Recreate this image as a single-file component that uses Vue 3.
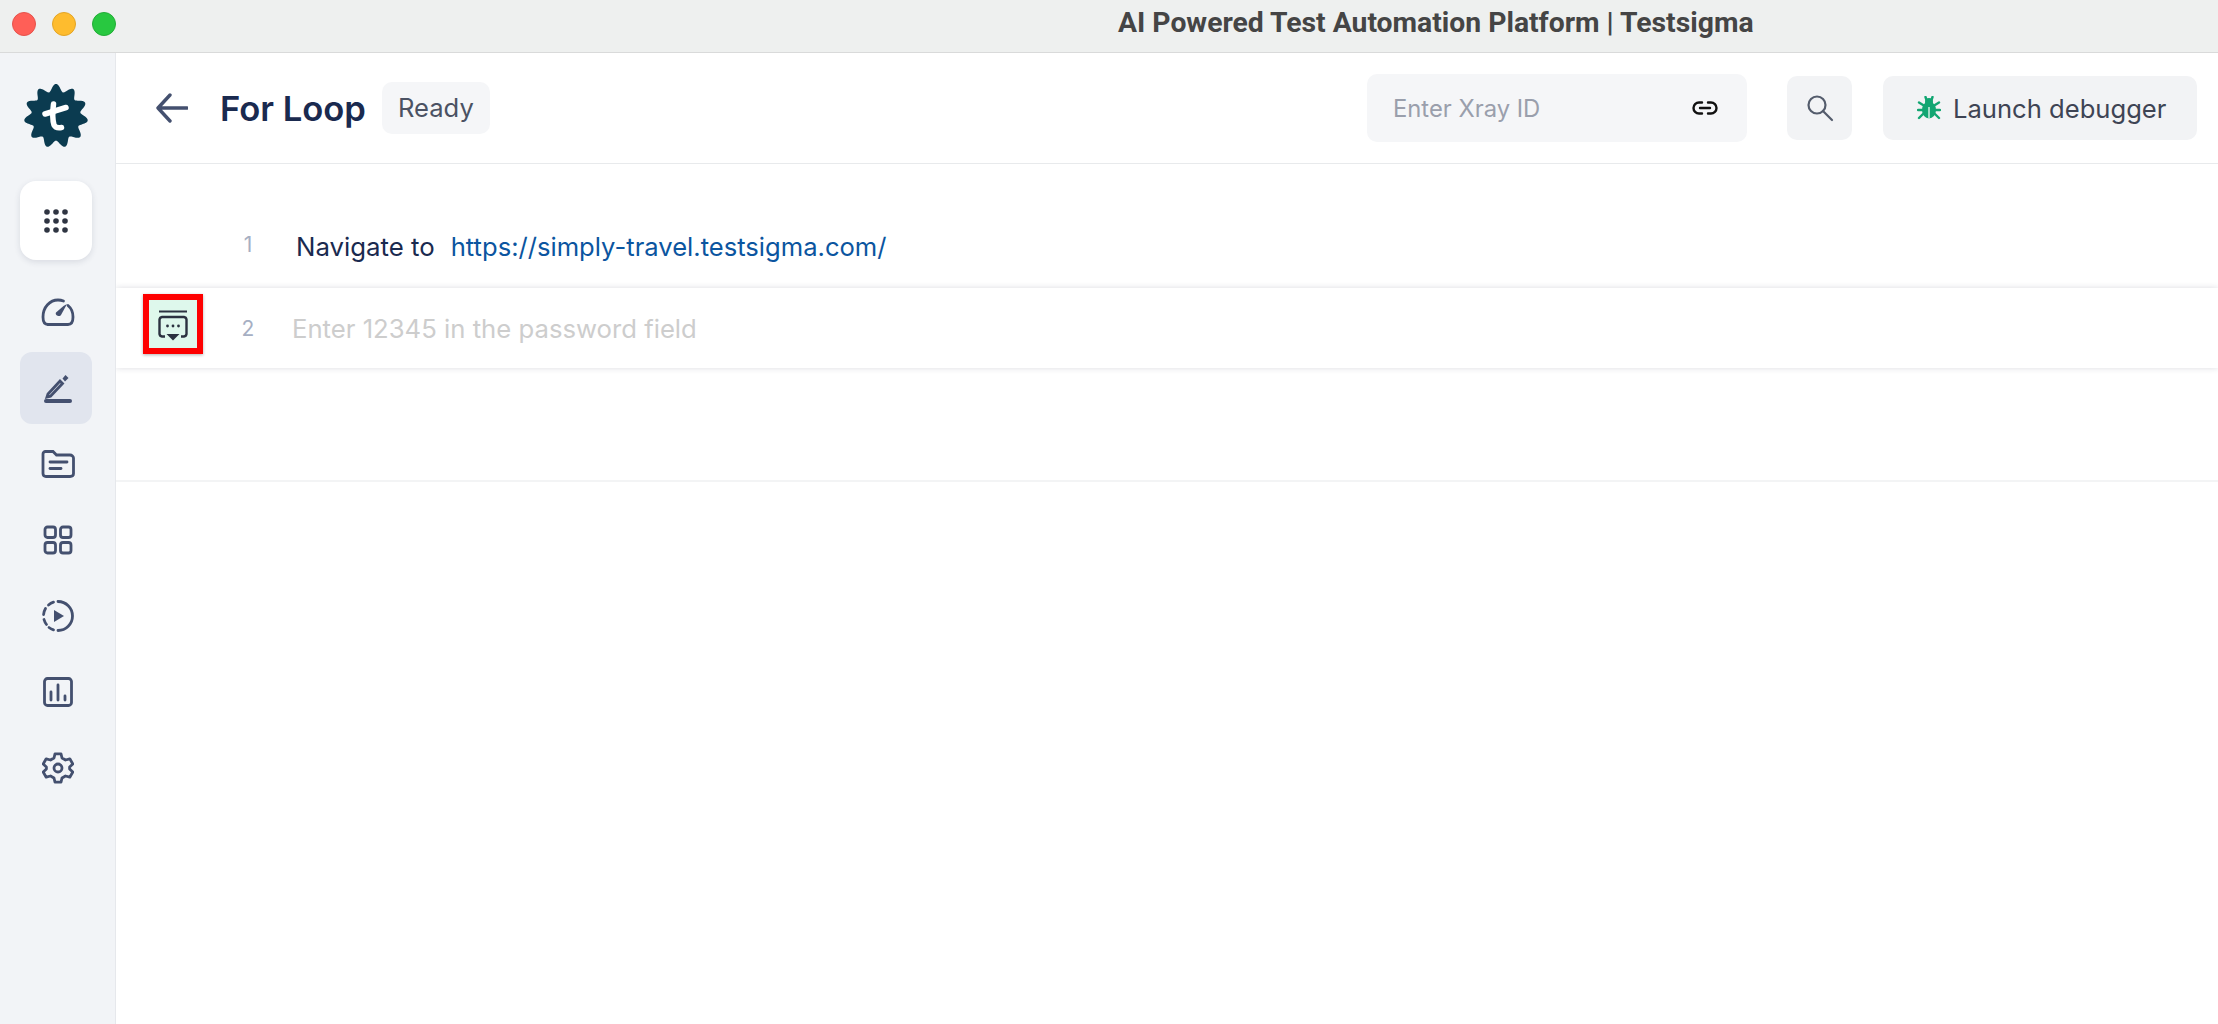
<script setup>
import { computed } from 'vue'

// Scalloped badge behind the "t" of the logo
const badgePath = computed(() => {
  const points = []
  for (let i = 0; i < 330; i++) {
    const a = (i / 330) * Math.PI * 2
    const r = 28.3 + 3.7 * Math.cos(a * 11)
    const x = 32 + r * Math.sin(a)
    const y = 32 - r * Math.cos(a)
    points.push(`${x.toFixed(2)} ${y.toFixed(2)}`)
  }
  return `M${points.join('L')}Z`
})

const dots = []
for (const y of [3, 12, 21]) {
  for (const x of [3, 12, 21]) dots.push({ x, y })
}
</script>

<template>
  <div class="window">
    <div class="titlebar">
      <div class="lights">
        <span class="light red"></span>
        <span class="light yellow"></span>
        <span class="light green"></span>
      </div>
      <div class="window-title">AI Powered Test Automation Platform | Testsigma</div>
    </div>

    <div class="body">
      <aside class="sidebar">
        <svg class="logo" width="64" height="64" viewBox="0 0 64 64">
          <path :d="badgePath" fill="#0b3b50" />
          <path d="M29.500 20 C28.500 28 28.500 36 30 41 C31.500 44 34.500 44 37.500 43.500" fill="none" stroke="#fff" stroke-width="5.500" stroke-linecap="round" />
          <path d="M21 30 L42 23.500" fill="none" stroke="#fff" stroke-width="5.500" stroke-linecap="round" />
        </svg>

        <div class="apps">
          <svg width="24" height="24" viewBox="0 0 24 24">
            <circle v-for="d in dots" :key="d.x + '-' + d.y" :cx="d.x" :cy="d.y" r="2.800" fill="#2f3542" />
          </svg>
        </div>

        <div class="nav">
          <div class="nav-item">
            <svg width="34" height="28" viewBox="0 0 34 28" class="ico">
              <path d="M7 26.500 H27 C30.500 26.500 32 24 32 19 C32 14 30 10 27 7.500" />
              <path d="M22.500 3 C20.500 2.200 19 2 17 2 C9 2 2 9 2 19 C2 24 3.500 26.500 7 26.500" />
              <path class="fill" d="M22.500 8 L26 6 L20 17 C18.500 19.500 13.500 17 15 14.500 Z" />
            </svg>
          </div>
          <div class="nav-item active">
            <svg width="30" height="30" viewBox="0 0 30 30" class="ico">
              <path d="M5 21 L4 24 L7.500 23.200 L19.500 10.500 L17 8 Z" />
              <path class="fill" d="M19.500 5.500 L22.500 2 L25.500 5 L22 8.500 Z" />
              <rect class="fill" x="1" y="26" width="28" height="4" rx="2" stroke="none" />
            </svg>
          </div>
          <div class="nav-item">
            <svg width="34" height="28" viewBox="0 0 34 28" class="ico">
              <path d="M2 4 C2 2.500 3 1.500 4.500 1.500 H12 L15.500 5 H29 C31 5 32.500 6.500 32.500 8 V23.500 C32.500 25.500 31 26.500 29 26.500 H5 C3 26.500 2 25.500 2 23.500 Z" />
              <path d="M9 12 H26" />
              <path d="M9 18.500 H20" />
            </svg>
          </div>
          <div class="nav-item">
            <svg width="30" height="30" viewBox="0 0 30 30" class="ico">
              <rect x="2" y="2" width="10.500" height="10.500" rx="2.500" />
              <rect x="17.500" y="2" width="10.500" height="10.500" rx="2.500" />
              <rect x="2" y="17.500" width="10.500" height="10.500" rx="2.500" />
              <rect x="17.500" y="17.500" width="10.500" height="10.500" rx="2.500" />
            </svg>
          </div>
          <div class="nav-item">
            <svg width="32" height="32" viewBox="0 0 32 32" class="ico">
              <path d="M16 1.500 A14.500 14.500 0 0 1 16 30.500 M11.500 29.800 A14.500 14.500 0 0 1 7 27.500 M4.500 24.500 A14.500 14.500 0 0 1 2 19.500 M1.600 14.500 A14.500 14.500 0 0 1 3.500 8.500 M6.500 5 A14.500 14.500 0 0 1 11.500 2.200" />
              <path class="fill" d="M12 10 L22 16 L12 22 Z" />
            </svg>
          </div>
          <div class="nav-item">
            <svg width="30" height="30" viewBox="0 0 30 30" class="ico">
              <rect x="1.500" y="1.500" width="27" height="27" rx="3" />
              <path d="M8 15 V23" />
              <path d="M15 8 V23" />
              <path d="M22 19 V23" />
            </svg>
          </div>
          <div class="nav-item">
            <svg width="32" height="32" viewBox="0 0 32 32" class="ico">
              <path d="M13 1.800 H19 L20 6 L23.500 8 L27.800 6.800 L30.800 12 L27.600 15 V17 L30.800 20 L27.800 25.200 L23.500 24 L20 26 L19 30.200 H13 L12 26 L8.500 24 L4.200 25.200 L1.200 20 L4.400 17 V15 L1.200 12 L4.200 6.800 L8.500 8 L12 6 Z" stroke-linejoin="round" />
              <circle cx="16" cy="16" r="4" />
            </svg>
          </div>
        </div>
      </aside>

      <main class="main">
        <header class="header">
          <svg class="back" width="32" height="30" viewBox="0 0 32 30">
            <path d="M14 2 L2 15 L14 28 M2 15 H31" fill="none" stroke="#44506f" stroke-width="3.400" stroke-linecap="round" stroke-linejoin="round" />
          </svg>
          <h1 class="title">For Loop</h1>
          <span class="badge">Ready</span>

          <div class="spacer"></div>

          <div class="xray">
            <span class="xray-text">Enter Xray ID</span>
            <svg width="26" height="14" viewBox="0 0 26 14">
              <path d="M10 1.500 H7 A5.500 5.500 0 0 0 7 12.500 H10 M16 1.500 H19 A5.500 5.500 0 0 1 19 12.500 H16 M8 7 H18" fill="none" stroke="#111" stroke-width="2.400" stroke-linecap="round" />
            </svg>
          </div>

          <button class="search">
            <svg width="28" height="28" viewBox="0 0 28 28">
              <circle cx="11" cy="11" r="8.500" fill="none" stroke="#545c6c" stroke-width="2.200" />
              <path d="M17 17 L26 26" stroke="#545c6c" stroke-width="2.200" stroke-linecap="round" />
            </svg>
          </button>

          <button class="debugger">
            <svg width="24" height="24" viewBox="0 0 24 24">
              <ellipse cx="12" cy="14" rx="7" ry="8.500" fill="#12a672" />
              <circle cx="12" cy="6" r="4" fill="#12a672" />
              <path d="M8.500 1 L9.500 4 M15.500 1 L14.500 4 M6 9 L2 6.500 M18 9 L22 6.500 M6 14 H1 M18 14 H23 M6 18 L2 22 M18 18 L22 22" stroke="#12a672" stroke-width="2.400" stroke-linecap="round" />
              <path d="M12 11 V22.500" stroke="#fff" stroke-width="1.200" />
            </svg>
            <span>Launch debugger</span>
          </button>
        </header>

        <section class="steps">
          <div class="step first">
            <div class="gutter"></div>
            <span class="num">1</span>
            <span class="step-text">Navigate to</span>
            <a class="link">https://simply-travel.testsigma.com/</a>
          </div>

          <div class="step second">
            <div class="gutter">
              <div class="marker">
                <svg width="30" height="33" viewBox="0 0 30 33">
                  <path d="M1 1.500 H29" fill="none" stroke="#2b3240" stroke-width="2" />
                  <path d="M7 26.500 H4 A3 3 0 0 1 1.500 24 V9.500 A3 3 0 0 1 4 7 H26 A3 3 0 0 1 28.500 9.500 V24 A3 3 0 0 1 26 26.500 H23" fill="none" stroke="#2b3240" stroke-width="2.400" />
                  <circle cx="9.500" cy="16" r="1.400" fill="#2b3240" />
                  <circle cx="15" cy="16" r="1.400" fill="#2b3240" />
                  <circle cx="20.500" cy="16" r="1.400" fill="#2b3240" />
                  <path d="M8.500 24 H21.500 L15 30.500 Z" fill="#2b3240" />
                </svg>
              </div>
            </div>
            <span class="num">2</span>
            <span class="step-text placeholder">Enter 12345 in the password field</span>
          </div>

          <div class="empty-row"></div>
        </section>
      </main>
    </div>
  </div>
</template>

<style>
html, body {
  margin: 0;
  background: #fff;
}
</style>

<style scoped>
.window {
  width: 2218px;
  height: 1024px;
  display: flex;
  flex-direction: column;
  overflow: hidden;
  font-family: Inter, "Liberation Sans", sans-serif;
  background: #fff;
}

.titlebar {
  height: 52px;
  flex: none;
  display: flex;
  align-items: center;
  background: #eef0ef;
  border-bottom: 1px solid #d9dada;
}

.lights {
  display: flex;
  gap: 16px;
  margin-left: 12px;
  margin-top: -4px;
}

.light {
  width: 24px;
  height: 24px;
  border-radius: 50%;
  box-sizing: border-box;
}

.red { background: #ff5f57; border: 1px solid #e5534c; }
.yellow { background: #febc2e; border: 1px solid #e3a526; }
.green { background: #28c840; border: 1px solid #22ad37; }

.window-title {
  margin-left: 1002px;
  margin-top: -8px;
  font-family: Roboto, "Liberation Sans", sans-serif;
  font-size: 28.300px;
  font-weight: 700;
  color: #454545;
  white-space: nowrap;
}

.body {
  flex: 1;
  display: flex;
  min-height: 0;
}

.sidebar {
  width: 115px;
  flex: none;
  display: flex;
  flex-direction: column;
  align-items: center;
  padding-top: 31px;
  background: #f2f4f7;
  border-right: 1px solid #e6e8ec;
}

.logo {
  display: block;
  margin-right: 3px;
}

.apps {
  width: 72px;
  height: 79px;
  margin-top: 33px;
  margin-right: 3px;
  display: flex;
  align-items: center;
  justify-content: center;
  background: #fff;
  border-radius: 16px;
  box-shadow: 0 2px 6px rgba(30, 40, 70, 0.12);
}

.nav {
  margin-top: 16px;
  margin-right: 3px;
  display: flex;
  flex-direction: column;
  gap: 4px;
}

.nav-item {
  width: 72px;
  height: 72px;
  box-sizing: border-box;
  padding-left: 3px;
  display: flex;
  align-items: center;
  justify-content: center;
  border-radius: 12px;
}

.nav-item.active {
  background: #e1e5ee;
}

.ico {
  fill: none;
  stroke: #44506f;
  stroke-width: 2.800;
  stroke-linecap: round;
}

.ico .fill {
  fill: #44506f;
  stroke: none;
}

.main {
  flex: 1;
  min-width: 0;
  display: flex;
  flex-direction: column;
}

.header {
  height: 110px;
  flex: none;
  display: flex;
  align-items: center;
  padding: 0 21px 0 40px;
  border-bottom: 1px solid #e8eaec;
}

.back {
  flex: none;
}

.title {
  margin: 0 0 0 32px;
  font-size: 34.600px;
  font-weight: 600;
  color: #1a2a4f;
}

.badge {
  margin-left: 16px;
  padding: 0 16px;
  height: 52px;
  line-height: 52px;
  border-radius: 10px;
  background: #f5f6f8;
  font-size: 25.600px;
  color: #4b5263;
}

.spacer {
  flex: 1;
}

.xray {
  width: 380px;
  height: 68px;
  box-sizing: border-box;
  padding: 0 29px 0 26px;
  display: flex;
  align-items: center;
  justify-content: space-between;
  border-radius: 10px;
  background: #f5f6f8;
}

.xray-text {
  font-size: 23.800px;
  color: #9a9fac;
}

.search {
  width: 65px;
  height: 64px;
  margin-left: 40px;
  padding: 0;
  border: none;
  display: flex;
  align-items: center;
  justify-content: center;
  border-radius: 10px;
  background: #f2f3f5;
}

.debugger {
  width: 314px;
  height: 64px;
  margin-left: 31px;
  padding: 0 0 0 34px;
  border: none;
  display: flex;
  align-items: center;
  gap: 12px;
  border-radius: 10px;
  background: #f2f3f5;
  font-family: inherit;
  font-size: 25.600px;
  color: #3e4454;
}

.steps {
  padding-top: 39px;
  overflow: hidden;
}

.step {
  display: flex;
  align-items: center;
}

.step.first {
  height: 85px;
  padding-top: 2px;
  box-sizing: border-box;
}

.step.second {
  height: 80px;
  background: #fff;
  box-shadow: 0 0 6px rgba(30, 40, 70, 0.16);
}

.gutter {
  width: 108px;
  flex: none;
}

.num {
  width: 48px;
  flex: none;
  text-align: center;
  font-size: 21px;
  color: #a6afc3;
}

.first .num {
  position: relative;
  top: -2px;
}

.step-text {
  font-size: 25.800px;
  color: #1a2a4f;
}

.first .step-text {
  margin-left: 24px;
}

.step-text.placeholder {
  margin-left: 20px;
  font-size: 25.700px;
  color: #cdcdcd;
}

.link {
  margin-left: 16px;
  font-size: 25.600px;
  color: #0b55a0;
}

.marker {
  width: 60px;
  height: 60px;
  margin-left: 27px;
  margin-bottom: 8px;
  padding-top: 5px;
  box-sizing: border-box;
  display: flex;
  align-items: center;
  justify-content: center;
  border: 6px solid #fe0000;
  background: #def8ec;
  box-shadow: 0 1px 3px rgba(0, 0, 0, 0.3);
}

.empty-row {
  height: 112px;
  border-bottom: 2px solid #f3f4f5;
}
</style>
